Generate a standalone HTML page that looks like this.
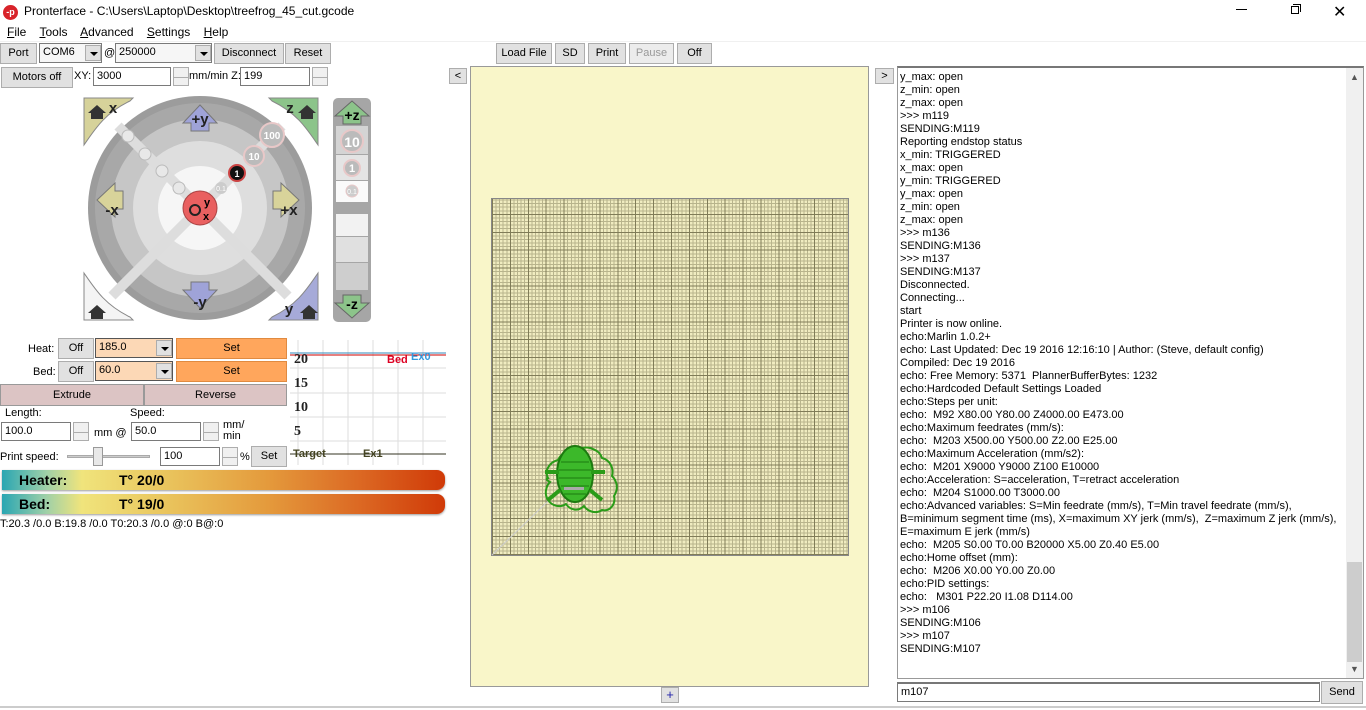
<!DOCTYPE html>
<html><head><meta charset="utf-8">
<style>
*{margin:0;padding:0;box-sizing:border-box}
body{width:1366px;height:710px;background:#fff;font-family:"Liberation Sans",sans-serif;font-size:11px;color:#000;position:relative;overflow:hidden}
.a{position:absolute}
.btn{position:absolute;background:#e1e1e1;border:1px solid #adadad;text-align:center;font-size:11px;line-height:18px}
.inp{position:absolute;background:#fff;border:1px solid #7a7a7a;font-size:11px;padding-left:3px;line-height:17px}
.spin{position:absolute;width:16px;border:1px solid #adadad;background:#f0f0f0}
.spin:before,.spin:after{content:"";position:absolute;left:0;right:0;height:50%;border-bottom:1px solid #adadad}
.spin:before{top:0}
.dd{position:absolute;width:16px;height:16px;background:#e1e1e1;border:1px solid #adadad}
.dd:after{content:"";position:absolute;left:4px;top:6px;border:4px solid transparent;border-top:4px solid #000;border-bottom:0}
#log div{height:13px;line-height:13px;white-space:pre}
.bar{position:absolute;left:2px;width:443px;height:20px;border-radius:0 8px 8px 0;background:linear-gradient(90deg,#2aa6b2 0%,#9fd0a8 10%,#f0e47c 18%,#eac860 35%,#e49a3c 60%,#dc6a24 80%,#d03a08 100%);font-weight:bold;font-size:14px;box-shadow:0 1px 2px #999}
</style></head><body>
<div class="a" style="left:3px;top:5px;width:15px;height:15px;border-radius:50%;background:#d8232a;color:#fff;font-size:9px;line-height:15px;text-align:center;font-weight:bold">-p</div>
<div class="a" style="left:24px;top:4px;font-size:12px">Pronterface - C:\Users\Laptop\Desktop\treefrog_45_cut.gcode</div>
<div class="a" style="left:1236px;top:9px;width:11px;height:1px;background:#000"></div>
<div class="a" style="left:1291px;top:6px;width:8px;height:8px;border:1px solid #000"></div>
<div class="a" style="left:1293px;top:4px;width:8px;height:8px;border-top:1px solid #000;border-right:1px solid #000"></div>
<div class="a" style="left:1333px;top:2px;font-size:16px">✕</div>
<div class="a" style="left:7px;top:25px;font-size:12px"><u>F</u>ile&nbsp;&nbsp;&nbsp; <u>T</u>ools&nbsp;&nbsp;&nbsp; <u>A</u>dvanced&nbsp;&nbsp;&nbsp; <u>S</u>ettings&nbsp;&nbsp;&nbsp; <u>H</u>elp</div>
<div class="a" style="left:0;top:41px;width:1366px;height:1px;background:#f0f0f0"></div>
<div class="btn" style="left:0;top:43px;width:37px;height:21px;line-height:19px">Port</div>
<div class="inp" style="left:39px;top:43px;width:63px;height:20px;background:#f6f6f6">COM6</div><div class="dd" style="left:85px;top:45px"></div>
<div class="a" style="left:104px;top:47px">@</div>
<div class="inp" style="left:115px;top:43px;width:97px;height:20px;background:#f6f6f6">250000</div><div class="dd" style="left:195px;top:45px"></div>
<div class="btn" style="left:214px;top:43px;width:70px;height:21px;line-height:19px">Disconnect</div>
<div class="btn" style="left:285px;top:43px;width:46px;height:21px;line-height:19px">Reset</div>
<div class="btn" style="left:1px;top:67px;width:72px;height:21px;line-height:19px">Motors off</div>
<div class="a" style="left:74px;top:70px">XY:</div>
<div class="inp" style="left:93px;top:67px;width:78px;height:19px">3000</div><div class="spin" style="left:173px;top:67px;height:19px"></div>
<div class="a" style="left:189px;top:70px">mm/min Z:</div>
<div class="inp" style="left:240px;top:67px;width:70px;height:19px">199</div><div class="spin" style="left:312px;top:67px;height:19px"></div>

<svg class="a" style="left:80px;top:95px" width="300" height="232" viewBox="80 95 300 232">
<path d="M84 98h49l-3 3c-25 12-35 28-46 44z" fill="#d6d29a" stroke="#888"/>
<path d="M318 98h-49l3 3c25 12 35 28 46 44z" fill="#8cc48a" stroke="#888"/>
<path d="M84 320h49l-3-3c-25-12-35-28-46-44z" fill="#f4f4f4" stroke="#888"/>
<path d="M318 320h-49l3-3c25-12 35-28 46-44z" fill="#a6aad8" stroke="#888"/>
<circle cx="200" cy="208" r="112" fill="#9c9c9c"/>
<circle cx="200" cy="208" r="105" fill="#a8a8a8"/>
<circle cx="200" cy="208" r="89" fill="#c6c6c6"/>
<circle cx="200" cy="208" r="67" fill="#dedede"/>
<circle cx="200" cy="208" r="42" fill="#f6f6f6"/>
<line x1="118" y1="126" x2="288" y2="296" stroke="#ddd" stroke-width="10"/>
<line x1="282" y1="126" x2="112" y2="296" stroke="#ddd" stroke-width="10"/>
<g fill="#e8e8e8" stroke="#bbb"><circle cx="128" cy="136" r="6"/><circle cx="145" cy="154" r="6"/><circle cx="162" cy="171" r="6"/><circle cx="179" cy="188" r="6"/></g>
<circle cx="272" cy="135" r="12" fill="#bbb" stroke="#e8c8c8" stroke-width="2"/><text x="272" y="139" font-size="10" fill="#fff" text-anchor="middle" font-weight="bold">100</text>
<circle cx="254" cy="156" r="10" fill="#bbb" stroke="#e8c8c8" stroke-width="2"/><text x="254" y="160" font-size="10" fill="#fff" text-anchor="middle" font-weight="bold">10</text>
<circle cx="237" cy="173" r="8" fill="#111" stroke="#c44" stroke-width="2"/><text x="237" y="177" font-size="9" fill="#fff" text-anchor="middle" font-weight="bold">1</text>
<circle cx="221" cy="188" r="6" fill="#ccc"/><text x="221" y="191" font-size="7" fill="#fff" text-anchor="middle">0.1</text>
<circle cx="200" cy="208" r="17" fill="#e96060" stroke="#a44"/>
<circle cx="195" cy="210" r="5" fill="none" stroke="#222" stroke-width="2"/><text x="204" y="206" font-size="11" font-weight="bold">y</text><text x="203" y="220" font-size="11" font-weight="bold">x</text>
<g stroke="#777" stroke-width="1">
<path d="M191 105h18v8h8l-17 18-17-18h8z" transform="rotate(180 200 118)" fill="#9fa3d8"/>
<path d="M191 300h18v8h8l-17 18-17-18h8z" transform="translate(0 -18)" fill="#9fa3d8"/>
<path d="M97 198v18h-8v8l-18-17 18-17v8z" transform="translate(26 -7)" fill="#d8d39a"/>
<path d="M290 198v18h8v8l18-17-18-17v8z" transform="translate(-17 -7)" fill="#d8d39a"/>
</g>
<g font-size="15" font-weight="bold" fill="#222" text-anchor="middle">
<text x="200" y="124">+y</text><text x="200" y="307">-y</text><text x="112" y="215">-x</text><text x="289" y="215">+x</text>
<text x="113" y="113">x</text><text x="290" y="113">z</text><text x="289" y="314">y</text>
</g>
<g fill="#333"><path d="M88 113l9-8 9 8h-3v6h-12v-6z"/><path d="M298 113l9-8 9 8h-3v6h-12v-6z"/><path d="M88 313l9-8 9 8h-3v6h-12v-6z"/><path d="M300 313l9-8 9 8h-3v6h-12v-6z"/></g>
<rect x="333" y="98" width="38" height="224" rx="5" fill="#a6a6a6"/>
<rect x="336" y="126" width="32" height="28" fill="#d4d4d4"/><rect x="336" y="155" width="32" height="25" fill="#e4e4e4"/><rect x="336" y="181" width="32" height="21" fill="#fafafa"/>
<rect x="336" y="214" width="32" height="22" fill="#f2f2f2"/><rect x="336" y="237" width="32" height="25" fill="#e0e0e0"/><rect x="336" y="263" width="32" height="27" fill="#cecece"/>
<circle cx="352" cy="141" r="11" fill="#bbb" stroke="#e8c8c8" stroke-width="2"/><text x="352" y="147" font-size="14" fill="#fff" text-anchor="middle" font-weight="bold">10</text>
<circle cx="352" cy="168" r="8" fill="#bbb" stroke="#e8c8c8" stroke-width="2"/><text x="352" y="172" font-size="11" fill="#fff" text-anchor="middle" font-weight="bold">1</text>
<circle cx="352" cy="191" r="6" fill="#ccc" stroke="#e8c8c8"/><text x="352" y="194" font-size="7" fill="#fff" text-anchor="middle">0.1</text>
<path d="M343 124v-8h-8l17-15 17 15h-8v8z" fill="#8cc48a" stroke="#666"/><text x="352" y="120" font-size="14" font-weight="bold" text-anchor="middle">+z</text>
<path d="M343 295v8h-8l17 15 17-15h-8v-8z" fill="#8cc48a" stroke="#666"/><text x="352" y="309" font-size="14" font-weight="bold" text-anchor="middle">-z</text>
</svg>

<div class="a" style="left:28px;top:343px">Heat:</div>
<div class="btn" style="left:58px;top:338px;width:36px;height:21px;line-height:19px">Off</div>
<div class="inp" style="left:95px;top:338px;width:78px;height:20px;background:#fcd8b6;border-color:#555">185.0</div><div class="dd" style="left:156px;top:340px"></div>
<div class="btn" style="left:176px;top:338px;width:111px;height:21px;line-height:19px;background:#ffa65c;border-color:#e08a40">Set</div>
<div class="a" style="left:33px;top:366px">Bed:</div>
<div class="btn" style="left:58px;top:361px;width:36px;height:21px;line-height:19px">Off</div>
<div class="inp" style="left:95px;top:361px;width:78px;height:20px;background:#fcd8b6;border-color:#555">60.0</div><div class="dd" style="left:156px;top:363px"></div>
<div class="btn" style="left:176px;top:361px;width:111px;height:21px;line-height:19px;background:#ffa65c;border-color:#e08a40">Set</div>
<div class="btn" style="left:0;top:384px;width:144px;height:22px;line-height:20px;background:#dcc4c4;border-color:#999">Extrude</div>
<div class="btn" style="left:144px;top:384px;width:143px;height:22px;line-height:20px;background:#dcc4c4;border-color:#999">Reverse</div>
<div class="a" style="left:5px;top:407px">Length:</div>
<div class="a" style="left:130px;top:407px">Speed:</div>
<div class="inp" style="left:1px;top:422px;width:70px;height:19px">100.0</div><div class="spin" style="left:73px;top:422px;height:19px"></div>
<div class="a" style="left:94px;top:427px">mm @</div>
<div class="inp" style="left:131px;top:422px;width:70px;height:19px">50.0</div><div class="spin" style="left:203px;top:422px;height:19px"></div>
<div class="a" style="left:223px;top:420px;line-height:11px">mm/<br>min</div>
<div class="a" style="left:0;top:451px">Print speed:</div>
<div class="a" style="left:67px;top:455px;width:83px;height:3px;background:#ccc;border:1px solid #aaa"></div>
<div class="a" style="left:93px;top:447px;width:10px;height:19px;background:#e8e8e8;border:1px solid #999"></div>
<div class="inp" style="left:160px;top:447px;width:60px;height:19px">100</div><div class="spin" style="left:222px;top:447px;height:19px"></div>
<div class="a" style="left:240px;top:451px">%</div>
<div class="btn" style="left:251px;top:446px;width:36px;height:21px;line-height:19px">Set</div>
<svg class="a" style="left:290px;top:340px" width="156" height="125">
<g stroke="#ddd"><line x1="8" y1="0" x2="8" y2="125"/><line x1="33" y1="0" x2="33" y2="125"/><line x1="58" y1="0" x2="58" y2="125"/><line x1="83" y1="0" x2="83" y2="125"/><line x1="108" y1="0" x2="108" y2="125"/><line x1="133" y1="0" x2="133" y2="125"/><line x1="0" y1="28" x2="156" y2="28"/><line x1="0" y1="53" x2="156" y2="53"/><line x1="0" y1="77" x2="156" y2="77"/><line x1="0" y1="101" x2="156" y2="101"/></g>
<line x1="0" y1="114" x2="156" y2="114" stroke="#332"/>
<line x1="0" y1="15" x2="156" y2="15" stroke="#c00"/>
<line x1="0" y1="13" x2="156" y2="13" stroke="#38b"/>
<g font-family="Liberation Serif" font-weight="bold" font-size="14" fill="#222"><text x="4" y="23">20</text><text x="4" y="47">15</text><text x="4" y="71">10</text><text x="4" y="95">5</text></g>
<text x="97" y="23" font-size="11" font-weight="bold" fill="#d02">Bed</text><text x="121" y="20" font-size="11" font-weight="bold" fill="#39d">Ex0</text>
<text x="3" y="117" font-size="11" font-weight="bold" fill="#442">Target</text><text x="73" y="117" font-size="11" font-weight="bold" fill="#442">Ex1</text>
</svg>
<div class="bar" style="top:470px"><span class="a" style="left:17px;top:2px">Heater:</span><span class="a" style="left:117px;top:2px">T° 20/0</span></div>
<div class="bar" style="top:494px"><span class="a" style="left:17px;top:2px">Bed:</span><span class="a" style="left:117px;top:2px">T° 19/0</span></div>
<div class="a" style="left:0;top:518px">T:20.3 /0.0 B:19.8 /0.0 T0:20.3 /0.0 @:0 B@:0</div>

<div class="btn" style="left:496px;top:43px;width:56px;height:21px;line-height:19px">Load File</div>
<div class="btn" style="left:555px;top:43px;width:30px;height:21px;line-height:19px">SD</div>
<div class="btn" style="left:588px;top:43px;width:38px;height:21px;line-height:19px">Print</div>
<div class="btn" style="left:629px;top:43px;width:45px;height:21px;line-height:19px;color:#999;background:#ececec">Pause</div>
<div class="btn" style="left:677px;top:43px;width:35px;height:21px;line-height:19px">Off</div>
<div class="btn" style="left:449px;top:68px;width:18px;height:16px;line-height:14px">&lt;</div>
<div class="a" style="left:470px;top:66px;width:399px;height:621px;background:#f9f6c9;border:1px solid #999"></div>
<div class="a" style="left:491px;top:198px;width:358px;height:358px;border:1px solid #888;background-color:#f0ecc0;background-image:repeating-linear-gradient(90deg,#807c58 0 1px,transparent 1px 17.9px),repeating-linear-gradient(0deg,#807c58 0 1px,transparent 1px 17.9px),repeating-linear-gradient(90deg,#b8b48c 0 1px,transparent 1px 3.58px),repeating-linear-gradient(0deg,#b8b48c 0 1px,transparent 1px 3.58px)"></div>
<svg class="a" style="left:490px;top:430px" width="140" height="130">
<line x1="2" y1="125" x2="75" y2="55" stroke="#ccc"/>
<path d="M58 48c-4-8 2-16 10-18 4-8 10-10 16-10 6 0 10-4 16-2 6 2 10 4 12 10 8 2 12 10 10 18 6 6 6 14 2 20 2 8-4 16-12 14-6 4-14 2-18-4-6 6-14 4-18-2-6 4-14 2-18-4-4-6-2-14 2-18-4-2-4-4-2-4z" fill="none" stroke="#2a9c18" stroke-width="2"/>
<ellipse cx="85" cy="44" rx="18" ry="28" fill="#3cb82a" stroke="#1d7a10" stroke-width="2"/>
<path d="M71 32h28M69 40h32M69 48h32M71 56h28M74 64h22" stroke="#1d7a10"/>
<path d="M69 42h-14M101 42h14M70 60l-12 10M100 60l12 10" stroke="#2a9c18" stroke-width="4"/>
<rect x="74" y="57" width="20" height="3" fill="#aaa"/>
</svg>
<div class="a" style="left:470px;top:687px;width:399px;height:19px;background:#fff"></div>
<div class="btn" style="left:661px;top:687px;width:18px;height:16px;line-height:14px;color:#22a;font-size:13px">+</div>
<div class="a" style="left:0;top:706px;width:1366px;height:2px;background:#ccc"></div>

<div class="btn" style="left:875px;top:68px;width:19px;height:16px;line-height:14px">&gt;</div>
<div class="a" style="left:897px;top:66px;width:467px;height:613px;border:1px solid #999;border-top:2px solid #777;background:#fff"></div>
<div class="a" style="left:1346px;top:68px;width:17px;height:610px;background:#f0f0f0"></div>
<div class="a" style="left:1347px;top:562px;width:15px;height:100px;background:#cdcdcd"></div>
<div class="a" style="left:1350px;top:72px;font-size:9px;color:#555">▲</div>
<div class="a" style="left:1350px;top:664px;font-size:9px;color:#555">▼</div>
<div id="log" class="a" style="left:900px;top:71px">
<div>y_max: open</div><div>z_min: open</div><div>z_max: open</div><div>&gt;&gt;&gt; m119</div><div>SENDING:M119</div><div>Reporting endstop status</div><div>x_min: TRIGGERED</div><div>x_max: open</div><div>y_min: TRIGGERED</div><div>y_max: open</div><div>z_min: open</div><div>z_max: open</div><div>&gt;&gt;&gt; m136</div><div>SENDING:M136</div><div>&gt;&gt;&gt; m137</div><div>SENDING:M137</div><div>Disconnected.</div><div>Connecting...</div><div>start</div><div>Printer is now online.</div><div>echo:Marlin 1.0.2+</div><div>echo: Last Updated: Dec 19 2016 12:16:10 | Author: (Steve, default config)</div><div>Compiled: Dec 19 2016</div><div>echo: Free Memory: 5371  PlannerBufferBytes: 1232</div><div>echo:Hardcoded Default Settings Loaded</div><div>echo:Steps per unit:</div><div>echo:  M92 X80.00 Y80.00 Z4000.00 E473.00</div><div>echo:Maximum feedrates (mm/s):</div><div>echo:  M203 X500.00 Y500.00 Z2.00 E25.00</div><div>echo:Maximum Acceleration (mm/s2):</div><div>echo:  M201 X9000 Y9000 Z100 E10000</div><div>echo:Acceleration: S=acceleration, T=retract acceleration</div><div>echo:  M204 S1000.00 T3000.00</div><div>echo:Advanced variables: S=Min feedrate (mm/s), T=Min travel feedrate (mm/s),</div><div>B=minimum segment time (ms), X=maximum XY jerk (mm/s),  Z=maximum Z jerk (mm/s),</div><div>E=maximum E jerk (mm/s)</div><div>echo:  M205 S0.00 T0.00 B20000 X5.00 Z0.40 E5.00</div><div>echo:Home offset (mm):</div><div>echo:  M206 X0.00 Y0.00 Z0.00</div><div>echo:PID settings:</div><div>echo:   M301 P22.20 I1.08 D114.00</div><div>&gt;&gt;&gt; m106</div><div>SENDING:M106</div><div>&gt;&gt;&gt; m107</div><div>SENDING:M107</div>
</div>
<div class="inp" style="left:897px;top:682px;width:423px;height:20px;border-top:2px solid #777">m107</div>
<div class="btn" style="left:1321px;top:681px;width:42px;height:23px;line-height:21px">Send</div>
</body></html>
